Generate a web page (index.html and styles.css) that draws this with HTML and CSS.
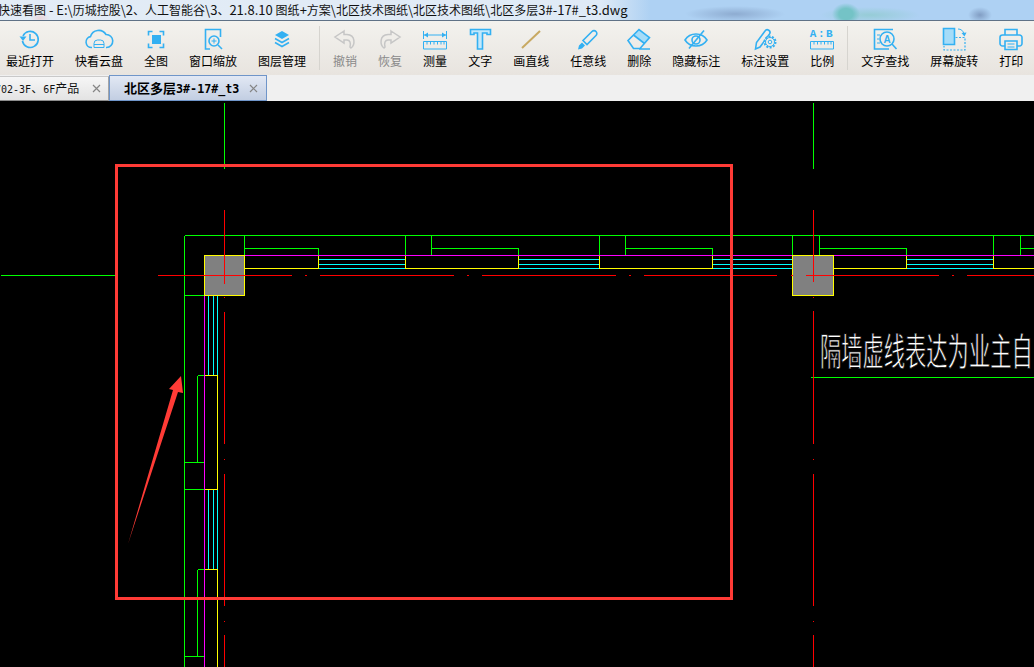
FILE: index.html
```html
<!DOCTYPE html>
<html lang="zh-CN">
<head>
<meta charset="utf-8">
<title>快速看图</title>
<link rel="stylesheet" href="styles.css">
</head>
<body>
<div class="app">
  <header class="titlebar"><span class="title-text">快速看图<span class="lat"> - E:\</span>历城控股<span class="lat">\2</span>、人工智能谷<span class="lat">\3</span>、<span class="lat">21.8.10 </span>图纸<span class="lat">+</span>方案<span class="lat">\</span>北区技术图纸<span class="lat">\</span>北区技术图纸<span class="lat">\</span>北区多层<span class="lat">3#-17#_t3.dwg</span></span></header>

  <nav class="toolbar">
    <div class="tool">
      <svg class="icon" viewBox="0 0 40 28"><path class="ln" d="M13 11a8 8 0 1 1-.6 5"/><path class="fl" d="M9.500 11.500h7l-3.500 4.500z"/><path class="ln" d="M20 9v6h5"/></svg>
      <span class="label">最近打开</span>
    </div>
    <div class="tool">
      <svg class="icon" viewBox="0 0 40 28"><path class="ln" d="M13 22.500h-.5a5.500 5.500 0 0 1-1-10.900A8.500 8.500 0 0 1 27 9.500a6.500 6.500 0 0 1 .5 13H27"/><path class="ln thin" d="M15 22.500v-4a3.500 3.500 0 0 1 3.500-3.500h3a3.500 3.500 0 0 1 3.500 3.500v4zM15 19.500h10"/></svg>
      <span class="label">快看云盘</span>
    </div>
    <div class="tool">
      <svg class="icon" viewBox="0 0 40 28"><rect class="fl" x="16" y="10" width="9" height="9"/><path class="ln" d="M12.500 10.500V6.500h4M23.500 6.500h4v4M27.500 18.500v4h-4M16.500 22.500h-4v-4"/></svg>
      <span class="label">全图</span>
    </div>
    <div class="tool">
      <svg class="icon" viewBox="0 0 40 28"><path class="ln" d="M17 24H12.500V4.500H27.500V12"/><circle class="ln" cx="21" cy="16" r="5"/><path class="ln" d="M25 20l4 4"/><path class="ln thin" d="M18.500 16h5M21 13.500v5"/></svg>
      <span class="label">窗口缩放</span>
    </div>
    <div class="tool">
      <svg class="icon" viewBox="0 0 40 28"><path class="fl" d="M20 6l7 4-7 4-7-4z"/><path class="ln" d="M13 13.500l7 4 7-4M13 17.500l7 4 7-4"/></svg>
      <span class="label">图层管理</span>
    </div>
    <div class="sep"></div>
    <div class="tool off">
      <svg class="icon" viewBox="0 0 40 28"><path class="ln-off" d="M19 6l-9 6 9 6v-3h3c3 0 4 3 3 7l1 1c4-3 5-13-4-13.500h-3z"/></svg>
      <span class="label">撤销</span>
    </div>
    <div class="tool off">
      <svg class="icon" viewBox="0 0 40 28"><path class="ln-off" d="M21 6l9 6-9 6v-3h-3c-3 0-4 3-3 7l-1 1c-4-3-5-13 4-13.500h3z"/></svg>
      <span class="label">恢复</span>
    </div>
    <div class="tool">
      <svg class="icon" viewBox="0 0 40 28"><path class="ln thin" d="M8.500 6v8M31.500 6v8M9 10h22"/><path class="fl" d="M9 10l4-2.500v5zM31 10l-4-2.500v5z"/><path class="ln thin" d="M8.500 16.500h23v7.500h-23zM12 16.500v3M15.500 16.500v3M19 16.500v3M22.500 16.500v3M26 16.500v3M29 16.500v3"/></svg>
      <span class="label">测量</span>
    </div>
    <div class="tool">
      <svg class="icon" viewBox="0 0 40 28"><path class="t-fill" d="M10.500 4.500h20v5h-3.500V8h-4.500v16h-5V8H14v1.500h-3.500z"/></svg>
      <span class="label">文字</span>
    </div>
    <div class="tool">
      <svg class="icon" viewBox="0 0 40 28"><path class="ln-tan" d="M11 23L29 6"/></svg>
      <span class="label">画直线</span>
    </div>
    <div class="tool">
      <svg class="icon" viewBox="0 0 40 28"><path class="ln" d="M24 6.500a2.700 2.700 0 0 1 4 4L19 19.500 15 15.500z"/><path class="fl" d="M14 17.500l3 3-3 3-4 1 1-4z"/></svg>
      <span class="label">任意线</span>
    </div>
    <div class="tool">
      <svg class="icon" viewBox="0 0 40 28"><path class="lite" d="M20 4.500l10.500 8-5 6-11-8.500z"/><path class="ln" d="M9 15.500L20 4.500l10.500 8L21 23.500h-6.500zM14.500 10l11 8.500M20 24h11"/></svg>
      <span class="label">删除</span>
    </div>
    <div class="tool">
      <svg class="icon" viewBox="0 0 40 28"><path class="ln" d="M9 15c5-8 17-8 22 0-5 8-17 8-22 0z"/><circle class="ln" cx="20" cy="15" r="4"/><path class="ln" d="M13 23.500L28 5.500"/></svg>
      <span class="label">隐藏标注</span>
    </div>
    <div class="tool">
      <svg class="icon" viewBox="0 0 40 28"><path class="ln" d="M10.500 24l1-6.500L20 6a2.500 2.500 0 0 1 4.500 3L15 22z"/><circle class="gear" cx="25" cy="17" r="5.500"/><circle class="ln thin" cx="25" cy="17" r="4.500"/><circle class="ln thin" cx="25" cy="17" r="1.800"/></svg>
      <span class="label">标注设置</span>
    </div>
    <div class="tool">
      <svg class="icon" viewBox="0 0 40 28"><text class="ab" x="20" y="12">A:B</text><path class="ln thin" d="M8.500 16.500h23v7.500h-23zM12 16.500v3M15.500 16.500v3M19 16.500v3M22.500 16.500v3M26 16.500v3M29 16.500v3"/></svg>
      <span class="label">比例</span>
    </div>
    <div class="sep"></div>
    <div class="tool">
      <svg class="icon" viewBox="0 0 40 28"><path class="ln" d="M28 4.500H9.500V24H24"/><path class="ln thin" d="M12 10h3M12 14h2M12 18h3"/><circle class="ln" cx="22" cy="14" r="7"/><path class="ln" d="M27 19l4.500 5"/><text class="a-mini" x="22" y="17.500">A</text></svg>
      <span class="label">文字查找</span>
    </div>
    <div class="tool">
      <svg class="icon" viewBox="0 0 40 28"><path class="lite" d="M9.500 3.500h11v16h-11z"/><path class="ln" d="M9.500 3.500h11v16h-11z"/><path class="ln dash" d="M21.500 12.500h9.500v12.500H10v-4"/><path class="ln thin" d="M24 4c3 0 5 1.500 6 5"/><path class="fl" d="M27.500 8l5-.5-2 4z"/></svg>
      <span class="label">屏幕旋转</span>
    </div>
    <div class="tool">
      <svg class="icon" viewBox="0 0 40 28"><path class="ln" d="M14 10V4.500h12V10M14 21h-2.500a2.500 2.500 0 0 1-2.500-2.500v-6A2.500 2.500 0 0 1 11.500 10h17a2.500 2.500 0 0 1 2.500 2.500v6a2.500 2.500 0 0 1-2.500 2.500H26"/><path class="ln" d="M14 16h12v8.500H14z"/><path class="ln thin" d="M16.500 19h7M16.500 22h7"/></svg>
      <span class="label">打印</span>
    </div>
  </nav>

  <div class="tabs">
    <div class="tab tab-plain">
      <span class="tab-text tab-clip"><span class="mono-sm">702-3F</span>、<span class="mono-sm">6F</span>产品</span>
      <svg class="close" viewBox="0 0 9 9"><path d="M1 1l7 7M8 1L1 8"/></svg>
    </div>
    <div class="tab tab-active">
      <span class="tab-text tab-bold">北区多层<span class="mono-md">3#-17#_t3</span></span>
      <svg class="close" viewBox="0 0 9 9"><path d="M1 1l7 7M8 1L1 8"/></svg>
    </div>
  </div>

  <main class="canvas">
    <svg class="drawing" viewBox="0 101 1034 566">
      <g class="px">
        <path class="c-green" d="M224 102V168M813 102V168M0 275H115M184 235H1034M184 235V667M244 235V255M244 248H318V255M405 235V255M431 235V255M431 248H518V255M599 235V255M625 235V255M625 248H712V255M792 235V255M819 235V255M819 248H906V255M993 235V255M1020 235V255M1020 248H1034M184 295H204M197 375V462M197 375H204M184 462H204M184 489H204M197 569V656M197 569H204M184 656H204M810 377H1034"/>
        <path class="c-magenta" d="M244 255H792M833 255H1034M204 295V667"/>
        <path class="c-cyan" d="M318 259H405M318 264H405M318 268H405M518 259H599M518 264H599M518 268H599M712 259H792M712 264H792M712 268H792M906 259H993M906 264H993M906 268H993M208 295V375M213 295V375M217 295V375M208 489V569M213 489V569M217 489V569"/>
        <rect class="col" x="204" y="255" width="40" height="40"/>
        <rect class="col" x="792" y="255" width="41" height="40"/>
        <path class="c-yellow" d="M244 268H318V255M405 255V268H518V255M599 255V268H712V255M833 268H906V255M993 255V268H1034M204 375H217V489H204M204 569H217V667"/>
        <path class="c-red" d="M224 209V283M224 296V297M224 311V443M224 458V459M224 473V605M224 620V621M224 634V667M813 209V245M813 245V281M813 296V297M813 310V443M813 458V459M813 473V605M813 620V621M813 634V667M157 275H291M304 275H306M319 275H453M466 275H468M481 275H615M628 275H630M643 275H776M790 275H792M805 275H938M951 275H953M966 275H1034"/>
      </g>
      <text class="cad" transform="translate(820 365) scale(0.56 1)">隔墙虚线表达为业主自</text>
      <rect class="mark" x="116.500" y="165.500" width="615" height="433"/>
      <path class="mark-fill" d="M128 544L173 390 169 389 181 376 183 393 178 392Z"/>
    </svg>
  </main>
</div>
</body>
</html>
```
FILE: styles.css
```css
* { box-sizing: border-box; }
html, body { margin: 0; padding: 0; background: #000; }
body { font-family: "Noto Sans CJK SC", "Liberation Sans", sans-serif; }

.app { display: flex; flex-direction: column; width: 1034px; height: 667px; overflow: hidden; }

.titlebar {
  flex: 0 0 21px;
  display: flex;
  align-items: center;
  overflow: hidden;
  white-space: nowrap;
  border-bottom: 1px solid #5f7286;
  background:
    radial-gradient(ellipse 14px 11px at 846px 14px, #74c3c6 0, #74c3c6 50%, rgba(116,195,198,0) 100%),
    radial-gradient(ellipse 50px 8px at 870px 15px, rgba(130,200,190,.55) 0, rgba(130,200,190,0) 100%),
    radial-gradient(ellipse 50px 8px at 735px 14px, rgba(110,135,175,.5) 0, rgba(110,135,175,0) 100%),
    radial-gradient(ellipse 12px 8px at 980px 15px, rgba(110,135,175,.7) 0, rgba(110,135,175,0) 100%),
    radial-gradient(ellipse 10px 6px at 40px 18px, rgba(240,190,190,.5) 0, rgba(240,190,190,0) 100%),
    linear-gradient(90deg, #e3ecf6 0, #dfeaf6 600px, #aed1f3 650px, #aed1f3 100%);
}
.title-text { margin-left: -2px; font-size: 12px; line-height: 20px; color: #111; }
.lat { font-size: 13px; }

.toolbar {
  flex: 0 0 54px;
  display: flex;
  gap: 21px;
  padding: 4px 0 0 6px;
  background: linear-gradient(#f3f2ee, #e8e4df);
}
.tool { display: flex; flex-direction: column; align-items: center; }
.icon { width: 40px; height: 28px; margin: 0 -20px; flex: none; overflow: visible; }
.label { font-size: 12px; line-height: 15px; color: #000; white-space: nowrap; }
.off .label { color: #8a8a8a; }
.sep { width: 1px; height: 44px; margin: 1px -8px 0; background: #d6d4cf; }

.ln { fill: none; stroke: #33b0f2; stroke-width: 1.6; }
.thin { stroke-width: 1; }
.dash { stroke-width: 1.2; stroke-dasharray: 2 1.5; }
.fl { fill: #33b0f2; stroke: none; }
.lite { fill: #a5dcf8; stroke: none; }
.ln-off { fill: none; stroke: #c6c6c6; stroke-width: 1.5; }
.ln-tan { fill: none; stroke: #c8a962; stroke-width: 2; }
.t-fill { fill: #c3e8fb; stroke: #33b0f2; stroke-width: 1.6; }
.gear { fill: #efede8; stroke: #33b0f2; stroke-width: 2; stroke-dasharray: 2 1.4; }
.ab { font-family: "Liberation Mono", monospace; font-size: 11px; font-weight: 700; fill: #33b0f2; text-anchor: middle; letter-spacing: 1.5px; }
.a-mini { font-family: "Liberation Sans", sans-serif; font-size: 10px; font-weight: 700; fill: #33b0f2; text-anchor: middle; }

.tabs { flex: 0 0 26px; display: flex; align-items: flex-end; background: #f0f0f0; overflow: hidden; }
.tab { display: flex; align-items: center; justify-content: space-between; height: 25px; border-bottom: 1px solid #8c8c8c; }
.tab-plain {
  width: 109px;
  padding-right: 7px;
  background: linear-gradient(#f6f6f6, #e3e3e3);
  border-right: 1px solid #a5a5a5;
  border-top: 1px solid #c9c9c9;
}
.tab-active {
  width: 158px;
  height: 26px;
  padding: 0 8px 0 14px;
  background: linear-gradient(#e2e8f4, #c2cee2);
  border: 1px solid #6f95c9;
}
.tab-text { font-size: 12px; line-height: 20px; color: #111; white-space: nowrap; }
.tab-clip { display: block; margin-left: 0; text-indent: -5px; }
.tab-bold { font-size: 13px; font-weight: 700; color: #000; }
.mono-sm { font-family: "DejaVu Sans Mono", monospace; font-size: 10px; }
.mono-md { font-family: "DejaVu Sans Mono", monospace; font-size: 11.7px; }
.close { width: 9px; height: 9px; flex: none; }
.close path { fill: none; stroke: #858585; stroke-width: 1.2; }

.canvas { flex: 1; min-height: 0; background: #000; }
.drawing { display: block; width: 1034px; height: 566px; }
.px { transform: translate(.5px, .5px); shape-rendering: crispEdges; }
.px path { fill: none; stroke-width: 1; }
.c-green { stroke: #00ff00; }
.c-magenta { stroke: #ff00ff; }
.c-cyan { stroke: #00ffff; }
.c-yellow { stroke: #ffff00; }
.c-red { stroke: #ff0000; }
.col { fill: #808080; stroke: #ffff00; stroke-width: 1; }
.cad {
  font-family: "Noto Sans CJK SC", sans-serif;
  font-size: 38px;
  fill: #fff;
  stroke: #000;
  stroke-width: .8px;
}
.mark { fill: none; stroke: #ff3b36; stroke-width: 3; }
.mark-fill { fill: #ff3b36; }
```
